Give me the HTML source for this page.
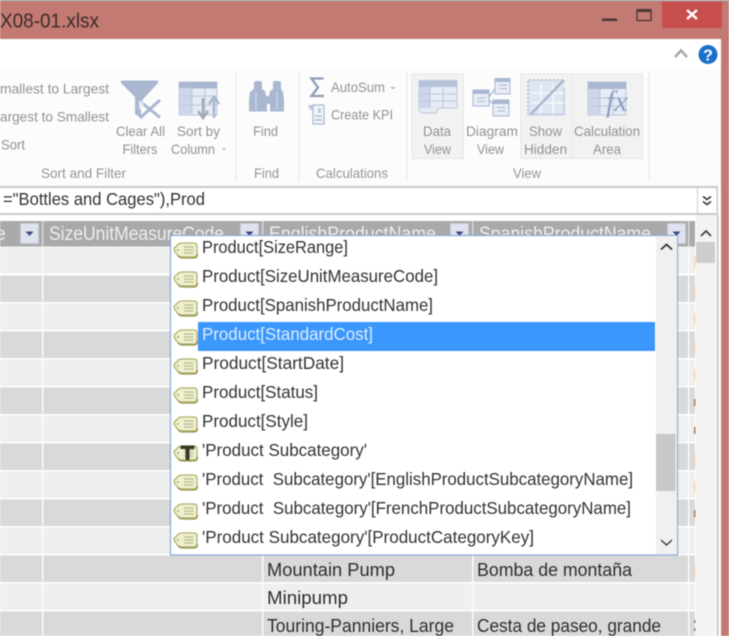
<!DOCTYPE html>
<html><head><meta charset="utf-8"><title>X08-01.xlsx</title>
<style>
html,body{margin:0;padding:0;width:729px;height:636px;overflow:hidden;background:#fff}
svg{display:block;filter:blur(.45px)}
text{font-family:"Liberation Sans",sans-serif;white-space:pre}
.r{font-size:14px;fill:#929292}
.g{font-size:14px;fill:#959595}
.l{font-size:17.5px;fill:#333}
.c{font-size:18px;fill:#2e2e2e}
.h{font-size:19.5px;fill:#eee}
</style></head><body>
<svg width="729" height="636" viewBox="0 0 729 636" xmlns="http://www.w3.org/2000/svg">
<defs>
<g id="tag">
<path d="M2 10 Q2.500 8.500 5 6.500 Q7 4 10 4 H22 Q25 4 25 7 V15 Q25 18 22 18 H10 Q7 18 5 15.500 Q2.500 12.500 2 10 Z" fill="#eff0cf" stroke="#b3b16c" stroke-width="1.300"/>
<path d="M6 16.500 Q8 18.800 10 18.800 H22 Q25.300 18.800 25.300 15" fill="none" stroke="#9c9a55" stroke-width="1.700"/>
<circle cx="6" cy="11" r="1" fill="#a5a566"/>
<path d="M12 8H21.500M12 11H21.500M12 14H21.500" stroke="#b9ba92" stroke-width="1.300"/>
</g>
<g id="btn">
<rect x=".5" y=".5" width="18" height="20" fill="#dfe3ee" stroke="#c4c9d6"/>
<path d="M5.500 8.500h8l-4 4.500z" fill="#3b4a85"/>
</g>
</defs>

<!-- background & title bar -->
<rect width="729" height="636" fill="#c27a72"/>
<rect width="729" height="1.500" fill="#a89a98"/>
<rect x="0" y="39" width="721" height="597" fill="#fff"/>
<rect x="0" y="70" width="721" height="116" fill="#fcfcfc"/>
<text x="0" y="27.500" font-size="20.500" fill="#3c2c2a" textLength="99" lengthAdjust="spacingAndGlyphs">X08-01.xlsx</text>

<!-- window controls -->
<rect x="602" y="18.500" width="15" height="2.500" fill="#4a3836"/>
<rect x="637" y="10" width="14" height="10.500" fill="none" stroke="#4a3836" stroke-width="1.300"/>
<rect x="637" y="9" width="14" height="3" fill="#4a3836"/>
<rect x="662" y="1.500" width="60" height="26.500" fill="#c84f4d"/>
<path d="M687 10 L697 19 M697 10 L687 19" stroke="#fff" stroke-width="2.500"/>
<path d="M675 57 L681 50.500 L687 57" fill="none" stroke="#a8a8a8" stroke-width="2.500"/>
<circle cx="708" cy="54.500" r="9.500" fill="#1a6fc9"/>
<text x="708" y="60.500" font-size="16" font-weight="bold" fill="#fff" text-anchor="middle">?</text>

<!-- ribbon separators -->
<rect x="235.500" y="72" width="1" height="109" fill="#e8e8e8"/>
<rect x="298.500" y="72" width="1" height="109" fill="#e8e8e8"/>
<rect x="406.500" y="72" width="1" height="109" fill="#e8e8e8"/>
<rect x="648.500" y="72" width="1" height="109" fill="#e8e8e8"/>

<!-- pressed buttons -->
<rect x="412" y="74" width="51.500" height="84.500" fill="#f2f2f2" stroke="#e6e6e6"/>
<rect x="520.500" y="74" width="52" height="84.500" fill="#f2f2f2" stroke="#e6e6e6"/>
<rect x="572.500" y="74" width="70" height="84.500" fill="#f2f2f2" stroke="#e6e6e6"/>

<!-- ribbon text -->
<text class="r" x="0" y="93.500" textLength="109" lengthAdjust="spacingAndGlyphs">mallest to Largest</text>
<text class="r" x="0" y="121.500" textLength="109" lengthAdjust="spacingAndGlyphs">argest to Smallest</text>
<text class="r" x="1" y="149.500" textLength="24" lengthAdjust="spacingAndGlyphs">Sort</text>
<text class="r" x="116" y="136" textLength="49" lengthAdjust="spacingAndGlyphs">Clear All</text>
<text class="r" x="122.500" y="154" textLength="35" lengthAdjust="spacingAndGlyphs">Filters</text>
<text class="r" x="177" y="136" textLength="43" lengthAdjust="spacingAndGlyphs">Sort by</text>
<text class="r" x="171" y="154" textLength="44" lengthAdjust="spacingAndGlyphs">Column</text>
<path d="M222 148h4l-2 2z" fill="#aaa"/>
<text class="r" x="253" y="136" textLength="25" lengthAdjust="spacingAndGlyphs">Find</text>
<text class="r" x="331" y="92" textLength="54" lengthAdjust="spacingAndGlyphs">AutoSum</text>
<path d="M390 87h6l-3 2.500z" fill="#bbb"/>
<text class="r" x="331" y="119.500" textLength="62" lengthAdjust="spacingAndGlyphs">Create KPI</text>
<text class="r" x="423" y="136" textLength="28" lengthAdjust="spacingAndGlyphs">Data</text>
<text class="r" x="424" y="154" textLength="27" lengthAdjust="spacingAndGlyphs">View</text>
<text class="r" x="466" y="136" textLength="52" lengthAdjust="spacingAndGlyphs">Diagram</text>
<text class="r" x="477" y="154" textLength="27" lengthAdjust="spacingAndGlyphs">View</text>
<text class="r" x="529" y="136" textLength="33" lengthAdjust="spacingAndGlyphs">Show</text>
<text class="r" x="524" y="154" textLength="43" lengthAdjust="spacingAndGlyphs">Hidden</text>
<text class="r" x="574" y="136" textLength="66" lengthAdjust="spacingAndGlyphs">Calculation</text>
<text class="r" x="593" y="154" textLength="28" lengthAdjust="spacingAndGlyphs">Area</text>
<text class="g" x="41" y="178" textLength="85" lengthAdjust="spacingAndGlyphs">Sort and Filter</text>
<text class="g" x="254" y="178" textLength="25" lengthAdjust="spacingAndGlyphs">Find</text>
<text class="g" x="316" y="178" textLength="72" lengthAdjust="spacingAndGlyphs">Calculations</text>
<text class="g" x="513" y="178" textLength="28" lengthAdjust="spacingAndGlyphs">View</text>

<!-- Clear All Filters icon -->
<path d="M121 80.500H158V83L145 97 141 102V118L135 114V97L121 83Z" fill="#a9b7d1"/>
<path d="M137 99L160 117.500M160 100L140 118" stroke="#a9b7d1" stroke-width="3" fill="none"/>
<path d="M139 100L144 104 139 110Z" fill="#e6ebf4"/>

<!-- Sort by Column icon -->
<rect x="179" y="82" width="38" height="33" fill="#e6ebf4" stroke="#bcc8de"/>
<rect x="179" y="82" width="38" height="6.500" fill="#a9b7d1"/>
<rect x="179" y="88" width="13" height="26" fill="#ccd6e8"/>
<path d="M192 88V115M205 88V115M179 96H217M179 105H217" stroke="#bcc8de" fill="none"/>
<path d="M203 98V116M198 111L203 118 208 111" stroke="#a3a9b8" stroke-width="2.600" fill="none"/>
<path d="M214 118V98M209 104L214 97 219 104" stroke="#a9b7d1" stroke-width="2.600" fill="none"/>

<!-- Find binoculars -->
<path d="M254 82l2-1h4l2 1v7l3 2 1 5h3l1-5 3-2v-7l2-1h4l2 1v7l2 3 1 8v11.500h-14V104h-3v7.500H249V100l1-8 4-3z" fill="#a9b7d1"/>
<path d="M256 92v18M277 92v18" stroke="#c8d2e4" stroke-width="1.500"/>

<!-- AutoSum sigma -->
<path d="M323.500 78.500H311.500L318 87.500 311.500 96H324" fill="none" stroke="#8e9dba" stroke-width="2.300"/>
<!-- Create KPI icon -->
<rect x="313" y="105" width="11" height="19" fill="#f2f5fa" stroke="#a9b7d1" stroke-width="1.200"/>
<path d="M315 116h7M315 120h7" stroke="#a9b7d1" stroke-width="1.500"/>
<path d="M308 105h5v5h-3zM318 108h3v5h-3z" fill="#bcc8de"/>

<!-- Data View icon -->
<path d="M419 80.500H457V108H441Q437 108 436 113H423Q419 113 419 108Z" fill="#e6ebf4" stroke="#bcc8de"/>
<rect x="419" y="80.500" width="38" height="6.500" fill="#b5c2da"/>
<rect x="419" y="87" width="11" height="21" fill="#ccd6e8"/>
<path d="M430 87V108M443 87V108M419 94H457M419 101H457" stroke="#bcc8de" fill="none"/>

<!-- Diagram View icon -->
<path d="M489 97 L497 86 M489 100 L497 108" stroke="#b4c0d8" stroke-width="1.600" fill="none"/>
<rect x="473" y="90" width="16" height="16" fill="#e9edf5" stroke="#a9b7d1"/>
<rect x="473" y="90" width="16" height="4" fill="#a9b7d1"/>
<path d="M477 98h8M477 101.500h8" stroke="#a9b7d1"/>
<rect x="495" y="78.500" width="15" height="15.500" fill="#e9edf5" stroke="#a9b7d1"/>
<rect x="495" y="78.500" width="15" height="3.500" fill="#a9b7d1"/>
<path d="M499 85h8M499 88.500h8" stroke="#a9b7d1"/>
<rect x="493" y="100" width="16" height="16" fill="#e9edf5" stroke="#a9b7d1"/>
<rect x="493" y="100" width="16" height="4" fill="#a9b7d1"/>
<path d="M497 107.500h8M497 111h8" stroke="#a9b7d1"/>

<!-- Show Hidden icon -->
<rect x="528" y="80" width="36" height="35" fill="#dfe6f2"/>
<path d="M528 115V80H564" fill="none" stroke="#a9b7d1" stroke-width="1.500" stroke-dasharray="2 2"/>
<path d="M564 88V114.500H532" fill="none" stroke="#bcc8de" stroke-width="1.500"/>
<path d="M541 84V114M553 84V114M532 93H564M532 103H564" stroke="#f4f6fa" stroke-width="1.800" fill="none"/>
<path d="M530 115L564 80" stroke="#a9b7d1" stroke-width="2.600"/>

<!-- Calculation Area icon -->
<rect x="588" y="82" width="38" height="33" fill="#e6ebf4" stroke="#bcc8de"/>
<rect x="588" y="82" width="38" height="7" fill="#a9b7d1"/>
<rect x="588" y="89" width="12" height="26" fill="#ccd6e8"/>
<path d="M600 89V115M613 89V115M588 98H626M588 106H626" stroke="#bcc8de" fill="none"/>
<text x="606" y="111" font-size="30" font-style="italic" fill="#8f9fbe" style="font-family:'Liberation Serif',serif">fx</text>

<!-- formula bar -->
<rect x="0" y="186" width="717" height="2" fill="#c8c8c8"/>
<rect x="0" y="213" width="717" height="2" fill="#c8c8c8"/>
<rect x="0" y="188" width="717" height="25" fill="#fff"/>
<rect x="697" y="188" width="1" height="25" fill="#c8c8c8"/>
<rect x="716.500" y="186" width="1.500" height="29" fill="#c8c8c8"/>
<text x="3" y="205" font-size="17.500" fill="#333" textLength="202" lengthAdjust="spacingAndGlyphs">="Bottles and Cages"),Prod</text>
<path d="M703 196.500l4 3 4-3M703 201.500l4 3 4-3" fill="none" stroke="#333" stroke-width="1.600"/>

<!-- grid header -->
<rect x="0" y="221" width="695" height="25.500" fill="#a9a9a9"/>
<rect x="42" y="221" width="1.500" height="26" fill="#d8d8d8"/>
<rect x="262" y="221" width="1.500" height="26" fill="#d8d8d8"/>
<rect x="472" y="221" width="1.500" height="26" fill="#d8d8d8"/>
<rect x="688" y="221" width="1.500" height="26" fill="#d8d8d8"/>
<text class="h" x="-5" y="240">e</text>
<text class="h" x="49" y="240" textLength="175" lengthAdjust="spacingAndGlyphs">SizeUnitMeasureCode</text>
<text class="h" x="269" y="240" textLength="167" lengthAdjust="spacingAndGlyphs">EnglishProductName</text>
<text class="h" x="479" y="240" textLength="172" lengthAdjust="spacingAndGlyphs">SpanishProductName</text>
<use href="#btn" x="20" y="223"/>
<use href="#btn" x="240" y="223"/>
<use href="#btn" x="450" y="223"/>
<use href="#btn" x="667" y="223"/>

<!-- grid rows -->
<g>
<rect x="0" y="247" width="695" height="26.500" fill="#efefef"/>
<rect x="0" y="275.500" width="695" height="26.500" fill="#d9d9d9"/>
<rect x="0" y="303.500" width="695" height="26.500" fill="#efefef"/>
<rect x="0" y="331.500" width="695" height="26.500" fill="#d9d9d9"/>
<rect x="0" y="359.500" width="695" height="26.500" fill="#efefef"/>
<rect x="0" y="387.500" width="695" height="26.500" fill="#d9d9d9"/>
<rect x="0" y="415.500" width="695" height="26.500" fill="#efefef"/>
<rect x="0" y="443.500" width="695" height="26.500" fill="#d9d9d9"/>
<rect x="0" y="471.500" width="695" height="26.500" fill="#efefef"/>
<rect x="0" y="499.500" width="695" height="26.500" fill="#d9d9d9"/>
<rect x="0" y="527.500" width="695" height="26.500" fill="#efefef"/>
<rect x="0" y="555.500" width="695" height="26.500" fill="#d9d9d9"/>
<rect x="0" y="583.500" width="695" height="26.500" fill="#efefef"/>
<rect x="0" y="611.500" width="695" height="25" fill="#d9d9d9"/>
</g>
<rect x="42" y="247" width="1.500" height="389" fill="#fbfbfb"/>
<rect x="262" y="247" width="1.500" height="389" fill="#fbfbfb"/>
<rect x="472" y="247" width="1.500" height="389" fill="#fbfbfb"/>
<rect x="688" y="247" width="1.500" height="389" fill="#fbfbfb"/>

<!-- ticks -->
<g fill="#f8d6ae">
<rect x="694" y="256" width="1.500" height="13"/>
<rect x="694" y="285" width="1.500" height="13"/>
<rect x="694" y="313" width="1.500" height="12"/>
<rect x="694" y="341" width="1.500" height="12"/>
<rect x="694" y="369" width="1.500" height="12"/>
<rect x="694" y="453" width="1.500" height="13"/>
<rect x="694" y="481" width="1.500" height="12"/>
<rect x="694" y="565" width="1.500" height="12"/>
</g>
<g fill="#a67c58">
<rect x="694" y="399" width="1.500" height="7"/>
<rect x="694" y="427" width="1.500" height="7"/>
<rect x="694" y="510" width="1.500" height="7"/>
<rect x="694" y="620" width="1.500" height="3"/>
<rect x="694" y="628" width="1.500" height="3"/>
</g>

<!-- main scrollbar -->
<rect x="696" y="215" width="20" height="421" fill="#f3f3f3"/>
<rect x="696" y="242" width="19" height="21" fill="#cdcdcd"/>
<path d="M701 236l5-5 5 5" fill="none" stroke="#444" stroke-width="1.800"/>
<rect x="717" y="215" width="1.500" height="421" fill="#bdbdbd"/>

<!-- cells -->
<text class="c" x="267" y="576" textLength="128" lengthAdjust="spacingAndGlyphs">Mountain Pump</text>
<text class="c" x="477" y="576" textLength="155" lengthAdjust="spacingAndGlyphs">Bomba de montaña</text>
<text class="c" x="267" y="604" textLength="81" lengthAdjust="spacingAndGlyphs">Minipump</text>
<text class="c" x="267" y="632" textLength="187" lengthAdjust="spacingAndGlyphs">Touring-Panniers, Large</text>
<text class="c" x="477" y="632" textLength="184" lengthAdjust="spacingAndGlyphs">Cesta de paseo, grande</text>

<!-- popup -->
<rect x="170.500" y="235.500" width="507" height="319.500" fill="#fff" stroke="#86abd6" stroke-width="1.200"/>
<rect x="656" y="236" width="21" height="318" fill="#f0f0f0"/>
<rect x="656" y="434" width="19.500" height="57" fill="#c8c8c8"/>
<path d="M661 249.500l5.500-5 5.500 5" fill="none" stroke="#333" stroke-width="1.800"/>
<path d="M661 540l5.500 5 5.500-5" fill="none" stroke="#444" stroke-width="1.500"/>
<rect x="198" y="322" width="457" height="29" fill="#3b97fb"/>

<use href="#tag" x="172" y="239"/>
<use href="#tag" x="172" y="268"/>
<use href="#tag" x="172" y="297"/>
<use href="#tag" x="172" y="326"/>
<use href="#tag" x="172" y="355"/>
<use href="#tag" x="172" y="384"/>
<use href="#tag" x="172" y="413"/>
<use href="#tag" x="172" y="442"/>
<path d="M180.500 445.500h14v3.500h-5v11h-4v-11h-5z" fill="#3a3a2a"/>
<use href="#tag" x="172" y="471"/>
<use href="#tag" x="172" y="500"/>
<use href="#tag" x="172" y="529"/>

<text class="l" x="202" y="253" textLength="146" lengthAdjust="spacingAndGlyphs">Product[SizeRange]</text>
<text class="l" x="202" y="282" textLength="236" lengthAdjust="spacingAndGlyphs">Product[SizeUnitMeasureCode]</text>
<text class="l" x="202" y="311" textLength="231" lengthAdjust="spacingAndGlyphs">Product[SpanishProductName]</text>
<text class="l" x="202" y="340" textLength="171" lengthAdjust="spacingAndGlyphs" style="fill:#dcecff">Product[StandardCost]</text>
<text class="l" x="202" y="369" textLength="142" lengthAdjust="spacingAndGlyphs">Product[StartDate]</text>
<text class="l" x="202" y="398" textLength="116" lengthAdjust="spacingAndGlyphs">Product[Status]</text>
<text class="l" x="202" y="427" textLength="106" lengthAdjust="spacingAndGlyphs">Product[Style]</text>
<text class="l" x="202" y="456" textLength="165" lengthAdjust="spacingAndGlyphs">'Product Subcategory'</text>
<text class="l" x="202" y="485" textLength="431" lengthAdjust="spacingAndGlyphs">'Product  Subcategory'[EnglishProductSubcategoryName]</text>
<text class="l" x="202" y="514" textLength="429" lengthAdjust="spacingAndGlyphs">'Product  Subcategory'[FrenchProductSubcategoryName]</text>
<text class="l" x="202" y="543" textLength="332" lengthAdjust="spacingAndGlyphs">'Product Subcategory'[ProductCategoryKey]</text>

<!-- window right edge -->
<rect x="721" y="28" width="8" height="608" fill="#c27a72"/>
</svg>
</body></html>
